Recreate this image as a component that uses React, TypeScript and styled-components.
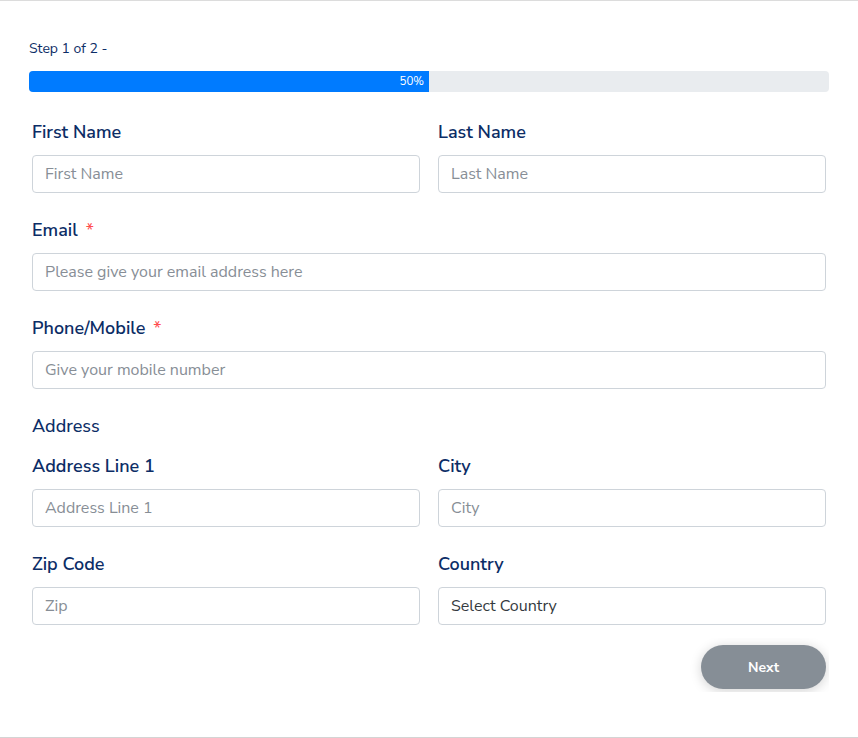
import React from 'react';
import styled, { createGlobalStyle } from 'styled-components';

const GlobalStyle = createGlobalStyle`
  html, body {
    margin: 0;
    padding: 0;
    background: #fff;
  }

  body {
    font-family: "Nunito Sans", "Open Sans", "Liberation Sans", sans-serif;
    color: #0c2d66;
  }

  * {
    box-sizing: border-box;
  }
`;

const Page = styled.div`
  height: 738px;
  border-top: 1px solid #dcdcdc;
  border-bottom: 1px solid #d4d4d4;
  padding: 0 29px;
`;

const StepText = styled.div`
  margin-top: 39px;
  font-size: 14px;
  line-height: 18px;
  color: #0c2d66;
`;

const Progress = styled.div`
  margin-top: 13px;
  height: 21px;
  border-radius: 4px;
  background: #e9ecef;
  overflow: hidden;
  display: flex;
`;

const ProgressFill = styled.div`
  background: #007bff;
  color: #fff;
  font-size: 11.5px;
  line-height: 21px;
  text-align: right;
  padding-right: 5px;
`;

const Form = styled.form`
  padding: 0 3px;
  margin-top: 28px;
  display: flex;
  flex-direction: column;
  gap: 25px;
`;

const Row = styled.div<{ $cols: number }>`
  display: grid;
  grid-template-columns: repeat(${p => p.$cols}, 1fr);
  column-gap: 18px;
`;

const Field = styled.div`
  display: flex;
  flex-direction: column;
`;

const Label = styled.label`
  font-size: 18px;
  font-weight: 600;
  line-height: 24px;
  margin-bottom: 11px;
  color: #0c2d66;
`;

const Required = styled.span`
  color: #ff4d4f;
  margin-left: 8px;
  font-weight: 400;
`;

const SectionTitle = styled.div`
  font-size: 18px;
  font-weight: 500;
  line-height: 24px;
  margin-bottom: -9px;
  color: #0c2d66;
`;

const Input = styled.input`
  height: 38px;
  width: 100%;
  border: 1px solid #ced4da;
  border-radius: 4px;
  padding: 0 12px;
  font-family: inherit;
  font-size: 16px;
  color: #343a40;
  background: #fff;

  &::placeholder {
    color: #878e96;
  }
`;

const Select = styled.div`
  height: 38px;
  border: 1px solid #ced4da;
  border-radius: 4px;
  padding: 0 12px;
  font-size: 16px;
  line-height: 36px;
  color: #343a40;
`;

const Footer = styled.div`
  display: flex;
  justify-content: flex-end;
  margin-top: -12px;
  margin-right: -3px;
  height: 54px;
  padding: 7px 3px 2px 0;
  overflow: hidden;
`;

const NextButton = styled.button`
  width: 125px;
  height: 44px;
  border: none;
  border-radius: 22px;
  background: #868e96;
  color: #fff;
  font-family: inherit;
  font-size: 14px;
  font-weight: 700;
  box-shadow: 0 2px 12px rgba(0, 0, 0, 0.18);
`;

export default function App() {
  return (
    <>
      <GlobalStyle />
      <Page>
        <StepText>Step 1 of 2 -</StepText>
        <Progress>
          <ProgressFill style={{ width: '50%' }}>50%</ProgressFill>
        </Progress>
        <Form onSubmit={e => e.preventDefault()}>
          <Row $cols={2}>
            <Field>
              <Label>First Name</Label>
              <Input placeholder='First Name' />
            </Field>
            <Field>
              <Label>Last Name</Label>
              <Input placeholder='Last Name' />
            </Field>
          </Row>
          <Row $cols={1}>
            <Field>
              <Label>Email<Required>*</Required></Label>
              <Input placeholder='Please give your email address here' />
            </Field>
          </Row>
          <Row $cols={1}>
            <Field>
              <Label>Phone/Mobile<Required>*</Required></Label>
              <Input placeholder='Give your mobile number' />
            </Field>
          </Row>
          <SectionTitle>Address</SectionTitle>
          <Row $cols={2}>
            <Field>
              <Label>Address Line 1</Label>
              <Input placeholder='Address Line 1' />
            </Field>
            <Field>
              <Label>City</Label>
              <Input placeholder='City' />
            </Field>
          </Row>
          <Row $cols={2}>
            <Field>
              <Label>Zip Code</Label>
              <Input placeholder='Zip' />
            </Field>
            <Field>
              <Label>Country</Label>
              <Select>Select Country</Select>
            </Field>
          </Row>
          <Footer>
            <NextButton type='button'>Next</NextButton>
          </Footer>
        </Form>
      </Page>
    </>
  );
}
